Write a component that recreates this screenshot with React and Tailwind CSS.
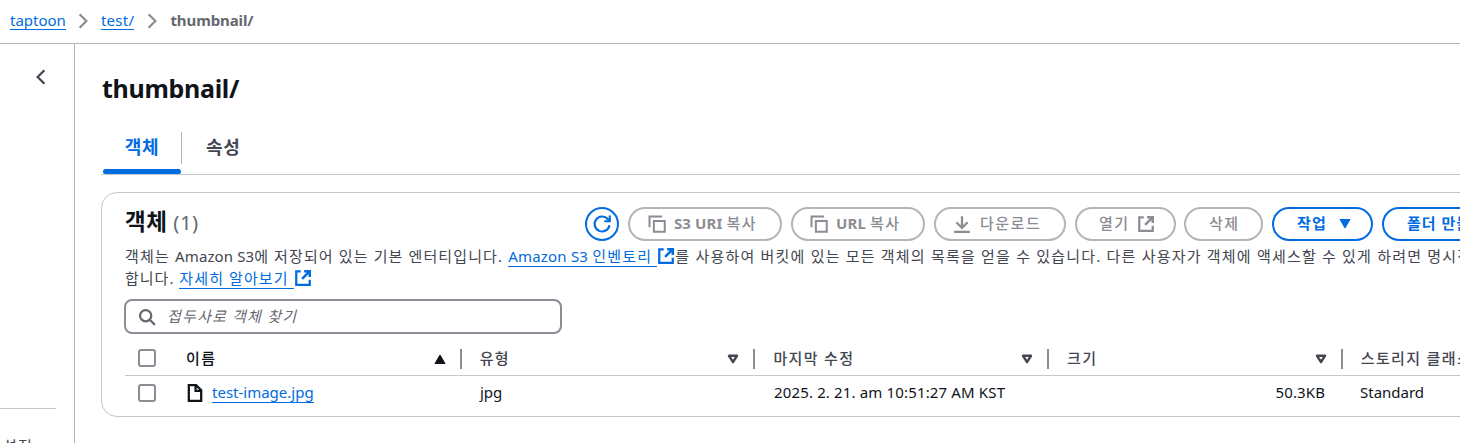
import React from 'react';

const K = ({ className = '', children }) => (
  <span className={`whitespace-pre ${className}`}>{children}</span>
);

const Svg = ({ className = '', s = 18, children }) => (
  <svg className={`shrink-0 ${className}`} width={s} height={s} viewBox="0 0 16 16" fill="none" stroke="currentColor" strokeWidth="2">
    {children}
  </svg>
);

const Copy = () => (
  <Svg s={20}>
    <path d="M2 10.5V2h10" strokeWidth="1.6" />
    <path d="M5.5 5.5h8.7v8.7H5.5z" strokeWidth="1.6" />
  </Svg>
);

const External = () => (
  <Svg>
    <path d="M14 9.5V14H2V2h4" />
    <path d="M9 2h5v5M13.8 2.2 7.2 8.8" strokeWidth="2.2" />
  </Svg>
);

const Chevron = ({ className }) => (
  <Svg s={18} className={className}>
    <path d="m5 2 6 6-6 6" />
  </Svg>
);

const Down = () => (
  <svg className="shrink-0" width="12" height="10" viewBox="0 0 12 10" fill="none" stroke="#424650" strokeWidth="2.4" strokeLinejoin="round">
    <path d="M2 1.8h8L6 8z" />
  </svg>
);

const Checkbox = () => <span className="size-[18px] shrink-0 rounded-[3px] border-2 border-[#8c8c94] bg-white" />;

const Button = ({ className, active, children }) => (
  <div
    className={`flex h-[34px] shrink-0 items-center rounded-full border-2 leading-[20px] ${
      active ? 'border-[#006ce0] font-bold text-[#006ce0]' : 'border-[#b4b4bb] font-medium text-[#8c8c94]'
    } ${className}`}
  >
    {children}
  </div>
);

const Head = ({ children, icon, last }) => (
  <div className="flex h-[20px] w-[293.7px] shrink-0 items-center justify-between pl-[18px]">
    <K className="font-medium tracking-[1.35px]">{children}</K>
    {!last && (
      <div className="flex h-[20px] items-center gap-[14px]">
        {icon}
        <span className="h-[20px] w-[2px] bg-[#8c8c94]" />
      </div>
    )}
  </div>
);

export default function App() {
  return (
    <div className="flex h-[443px] w-[1460px] flex-col overflow-hidden bg-white font-['Noto_Sans','Noto_Sans_CJK_KR',sans-serif] text-[15px] text-[#0f141a]">
      <nav className="flex h-[44px] shrink-0 items-center border-b border-[#b4b4bb] pb-px pl-[10px] leading-[16px]">
        <a className="border-b border-[#006ce0] pb-px text-[#006ce0]">taptoon</a>
        <Chevron className="mx-[8.5px] text-[#8c8c94]" />
        <a className="border-b border-[#006ce0] pb-px tracking-[0.3px] text-[#006ce0]">test/</a>
        <Chevron className="mx-[9px] text-[#8c8c94]" />
        <span className="pb-[2px] font-bold tracking-[-0.1px] text-[#656871]">thumbnail/</span>
      </nav>
      <div className="flex min-h-0 flex-1">
        <aside className="flex w-[75px] shrink-0 flex-col overflow-hidden border-r border-[#b4b4bb]">
          <div className="flex h-[364px] shrink-0 pl-[32px] pt-[24px] text-[#424650]">
            <Chevron className="rotate-180" />
          </div>
          <div className="mr-[18px] border-t border-[#c6c6cd] pl-[3px] pt-[27px] leading-[20px]">
            <K className="tracking-[1.2px] text-[#424650]">설정</K>
          </div>
        </aside>
        <main className="flex min-w-0 flex-1 flex-col overflow-hidden pl-[26px]">
          <h1 className="mt-[27px] h-[35px] shrink-0 pl-px text-[25px] font-bold leading-[34px] tracking-[-0.3px]">thumbnail/</h1>
          <div className="mt-[26px] flex h-[43px] shrink-0 border-b border-[#c6c6cd] text-[18px] font-bold leading-[30px] tracking-[0.7px]">
            <div className="flex w-[81px] flex-col justify-between pl-[2px] text-[#006ce0]">
              <div className="flex h-[32px] justify-center border-r border-[#b4b4bb]">
                <K>객체</K>
              </div>
              <span className="h-[5px] w-[78px] rounded-full bg-[#006ce0]" />
            </div>
            <K className="pl-[24px] text-[#424650]">속성</K>
          </div>
          <section className="mt-[17px] flex h-[225px] w-[1500px] shrink-0 flex-col rounded-[16px] border border-[#c6c6cd] pl-[23px] pt-[14px]">
            <div className="flex h-[34px] shrink-0 items-center gap-[9px]">
              <h2 className="-mt-[4px] w-[451px] whitespace-pre text-[22.5px] font-bold leading-[30px] tracking-[0.5px]">
                객체<span className="text-[20.5px] font-normal text-[#656871]"> (1)</span>
              </h2>
              <Button active className="w-[34px] justify-center">
                <Svg s={20}>
                  <path d="M14 9A6 6 0 1 1 12.6 4L14 5.4" strokeWidth="1.7" />
                  <path d="M14.2 1.2v4.6H9.8" strokeWidth="1.7" />
                </Svg>
              </Button>
              <Button className="w-[154px] gap-[7px] pb-px pl-[17px]">
                <Copy />
                <K className="-mt-px"><span className="font-bold tracking-[0.1px]">S3 URI </span><span className="tracking-[1.6px]">복사</span></K>
              </Button>
              <Button className="w-[134px] gap-[7px] pb-px pl-[16px]">
                <Copy />
                <K className="-mt-px"><span className="font-bold tracking-[0.1px]">URL </span><span className="tracking-[1.6px]">복사</span></K>
              </Button>
              <Button className="w-[132px] gap-[9px] pb-[2px] pl-[17px]">
                <Svg className="mt-px">
                  <path d="M1 15h14M8 1v10.5M3 6.5l5 5 5-5" />
                </Svg>
                <K className="tracking-[1.5px]">다운로드</K>
              </Button>
              <Button className="w-[101px] gap-[7px] pb-[2px] pl-[22px]">
                <K className="tracking-[1.5px]">열기</K>
                <span className="mt-px"><External /></span>
              </Button>
              <Button className="-ml-px w-[79px] pb-[2px] pl-[23px]">
                <K className="tracking-[1.4px]">삭제</K>
              </Button>
              <Button active className="w-[101px] gap-[12px] pb-[2px] pl-[23px]">
                <K className="tracking-[1.2px]">작업</K>
                <svg className="mt-[2px]" width="12" height="10" viewBox="0 0 12 10" fill="currentColor">
                  <path d="M1 .5h10L6 9z" stroke="currentColor" strokeLinejoin="round" />
                </svg>
              </Button>
              <Button active className="w-[140px] pb-[2px] pl-[23px]">
                <K className="tracking-[1px]">폴더 만들기</K>
              </Button>
            </div>
            <div className="mt-[4px] flex h-[22px] shrink-0 items-center leading-[20px] text-[#424650]">
              <K className="tracking-[1.2px]">객체는 </K>
              <K className="tracking-[0.1px]">Amazon S3</K>
              <K className="tracking-[1.12px]">에 저장되어 있는 기본 엔터티입니다. </K>
              <a className="mt-px flex h-[20px] items-center border-b border-[#006ce0] pb-px text-[#006ce0]">
                <K className="tracking-[0.2px]">Amazon S3 </K>
                <K className="tracking-[1.2px]">인벤토리 </K>
              </a>
              <span className="flex text-[#006ce0]"><External /></span>
              <K className="tracking-[1.2px]">를 사용하여 버킷에 있는 모든 객체의 목록을 얻을 수 있습니다. 다른 사용자가 객체에 액세스할 수 있게 하려면 명시적으로 권한을 부여해야</K>
            </div>
            <div className="flex h-[22px] shrink-0 items-center leading-[20px] text-[#424650]">
              <K className="tracking-[1px]">합니다. </K>
              <a className="mt-px flex h-[20px] items-center border-b border-[#006ce0] pb-px text-[#006ce0]">
                <K className="tracking-[1.1px]">자세히 알아보기 </K>
              </a>
              <span className="flex text-[#006ce0]"><External /></span>
            </div>
            <div className="-ml-px mt-[10px] flex h-[35px] w-[438px] shrink-0 items-center gap-[11px] rounded-[8px] border-2 border-[#8c8c94] pl-[12px] text-[#656871]">
              <Svg>
                <circle cx="6.8" cy="6.8" r="5" />
                <path d="m10.5 10.5 4.5 4.5" />
              </Svg>
              <K className="-mt-[2px] italic leading-[20px] tracking-[1.2px]">접두사로 객체 찾기</K>
            </div>
            <div className="flex h-[42px] shrink-0 items-center border-b border-[#c6c6cd] pl-[13px] pt-[7px] text-[#424650]">
              <Checkbox />
              <span className="ml-[10px] mr-[2px] mt-px h-[20px] w-[2px] bg-[#c6c6cd]" />
              <span className="mt-px text-[#0f141a]">
                <Head
                  icon={
                    <svg width="12" height="10" viewBox="0 0 12 10" fill="currentColor">
                      <path d="M1 9.5h10L6 1z" stroke="currentColor" strokeLinejoin="round" />
                    </svg>
                  }
                >
                  이름
                </Head>
              </span>
              <div className="mt-px flex">
                <Head icon={<Down />}>유형</Head>
                <Head icon={<Down />}>마지막 수정</Head>
                <Head icon={<Down />}>크기</Head>
                <Head last>스토리지 클래스</Head>
              </div>
            </div>
            <div className="flex h-[34px] shrink-0 items-center pl-[13px] leading-[16px]">
              <Checkbox />
              <div className="flex w-[324px] shrink-0 items-center pl-[30px]">
                <svg className="shrink-0" width="18" height="18" viewBox="0 0 16 16" fill="none" stroke="currentColor" strokeWidth="2">
                  <path d="M2.5 1H9l4.5 4.5V15h-11zM8.5 1v5h5" />
                </svg>
                <a className="ml-[8px] border-b border-[#006ce0] pb-[2px] text-[#006ce0]">test-image.jpg</a>
              </div>
              <span className="w-[294px] shrink-0 pb-[2px]">jpg</span>
              <span className="w-[294px] shrink-0 pb-[2px] tracking-[0.15px]">2025. 2. 21. am 10:51:27 AM KST</span>
              <span className="w-[257px] shrink-0 pb-[2px] text-right tracking-[0.1px]">50.3KB</span>
              <span className="pb-[2px] pl-[35px]">Standard</span>
            </div>
          </section>
        </main>
      </div>
    </div>
  );
}
